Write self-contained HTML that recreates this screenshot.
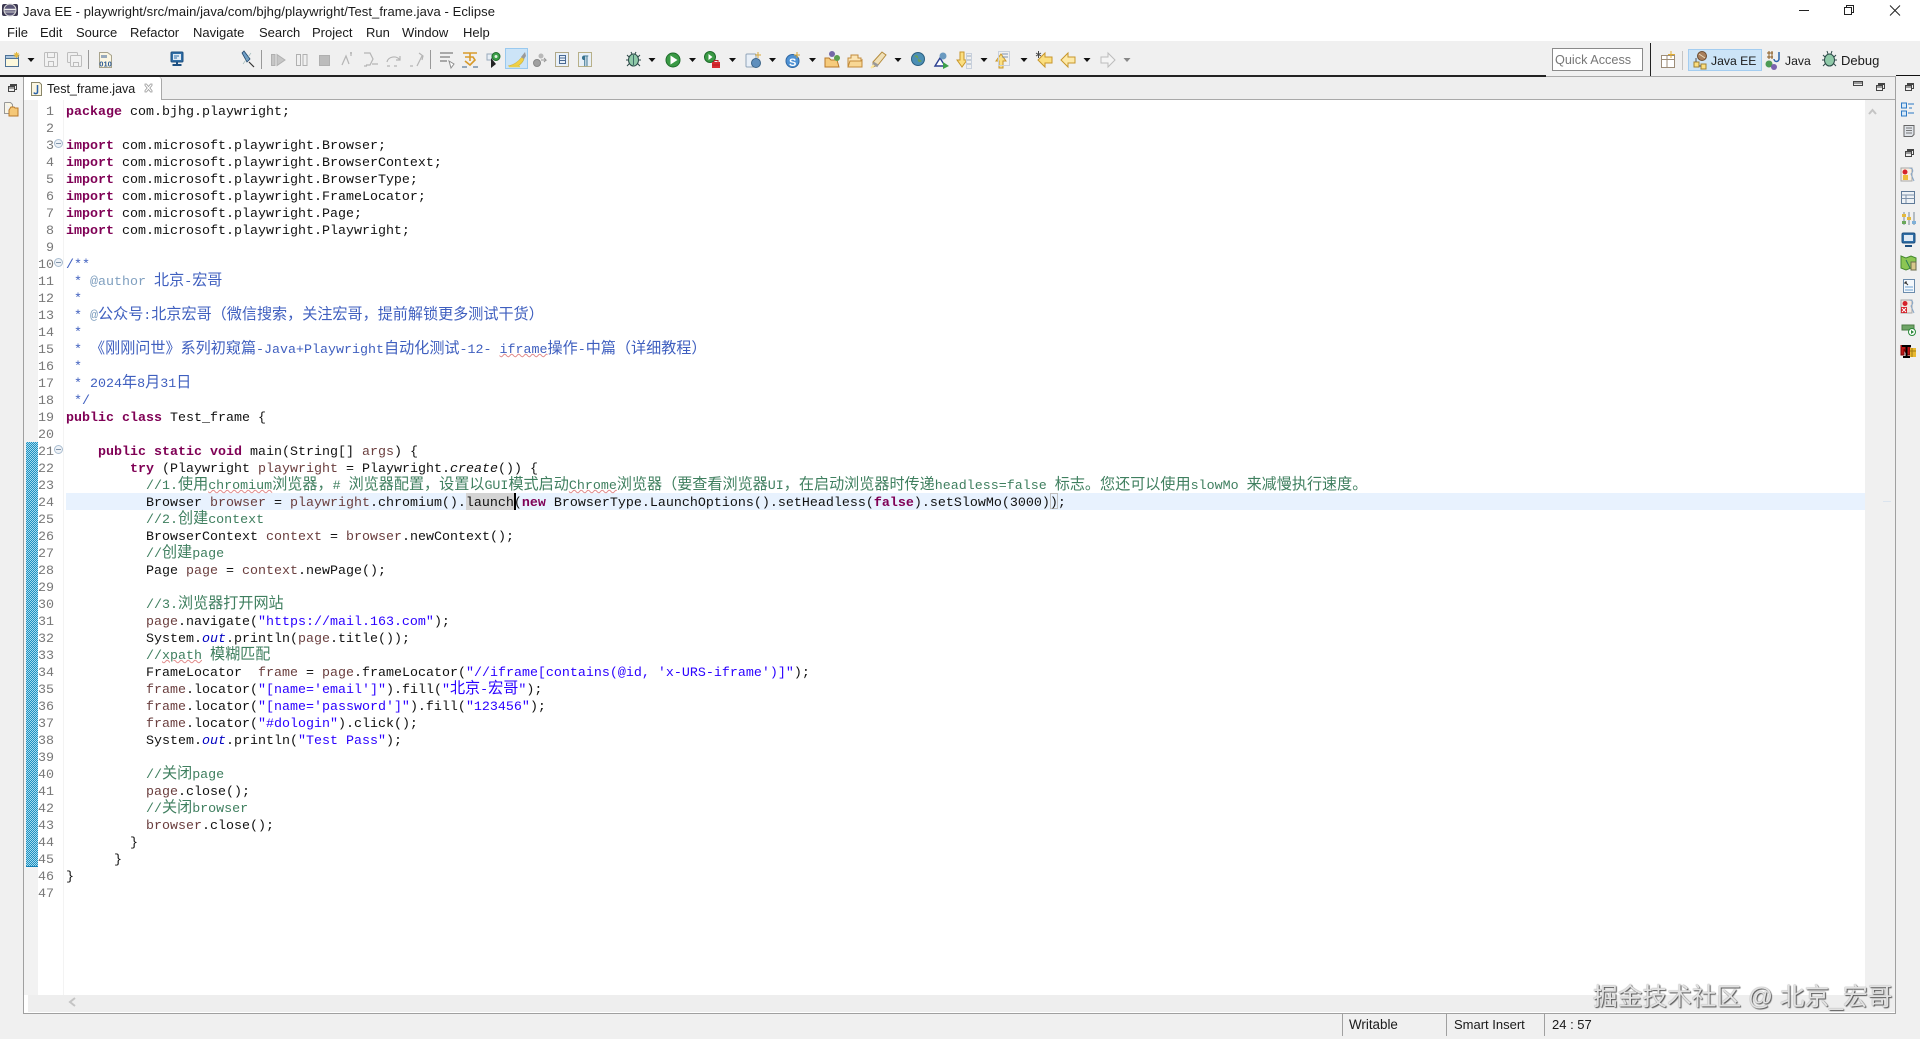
<!DOCTYPE html>
<html><head><meta charset="utf-8"><title>Java EE - Eclipse</title>
<style>
html,body{margin:0;padding:0;width:1920px;height:1039px;overflow:hidden;background:#f0f0f0}
body{position:relative;font-family:"Liberation Sans","Noto Sans CJK SC",sans-serif;color:#1a1a1a}
.a{position:absolute}
.t{position:absolute;white-space:pre;font-size:13px;line-height:16px}
#code{position:absolute;left:66px;top:104px;font:13.33px/17px "Liberation Mono","WenQuanYi Zen Hei",monospace;color:#111}
#code div{height:17px;white-space:pre}
#nums{position:absolute;left:30px;width:24px;top:104px;text-align:right;font:13.33px/17px "Liberation Mono",monospace;color:#787878}
#nums div{height:17px}
.k{color:#7f0055;font-weight:bold}
.c{color:#3f7f5f}.d{color:#3f5fbf}.g{color:#7f9fbf}.s{color:#2a00ff}.v{color:#6a3e3e}.o{color:#0000c0;font-style:italic}
i{font-style:normal;font-size:15.1px;line-height:0;font-family:"WenQuanYi Zen Hei","Noto Sans CJK SC",sans-serif}
u{text-decoration:underline wavy #e08a8a 1px;text-underline-offset:0}
</style></head><body>
<div class="a" style="left:0;top:0;width:1920px;height:41px;background:#fff"></div>
<div class="a" style="left:0;top:41px;width:1920px;height:35px;background:#f0f0f0"></div>
<div class="t" style="left:23px;top:4px;letter-spacing:.075px">Java EE - playwright/src/main/java/com/bjhg/playwright/Test_frame.java - Eclipse</div>
<div class="t" style="left:7px;top:25px">File</div><div class="t" style="left:40px;top:25px">Edit</div><div class="t" style="left:76px;top:25px">Source</div><div class="t" style="left:130px;top:25px">Refactor</div><div class="t" style="left:193px;top:25px">Navigate</div><div class="t" style="left:259px;top:25px">Search</div><div class="t" style="left:312px;top:25px">Project</div><div class="t" style="left:366px;top:25px">Run</div><div class="t" style="left:402px;top:25px">Window</div><div class="t" style="left:463px;top:25px">Help</div>

<!-- frame -->
<div class="a" style="left:23px;top:76px;width:1873px;height:938px;box-sizing:border-box;border:1px solid #a0a0a0;border-top:none;background:#fff"></div>
<div class="a" style="left:24px;top:77px;width:1871px;height:22px;background:#eee"></div>
<div class="a" style="left:24px;top:99px;width:1871px;height:1px;background:#a8a8a8"></div>
<div class="a" style="left:0;top:75px;width:1546px;height:2px;background:#222"></div>
<div class="a" style="left:1546px;top:76px;width:350px;height:1px;background:#a8a8a8"></div>
<div class="a" style="left:1896px;top:75px;width:24px;height:1px;background:#111"></div>
<div class="a" style="left:1650px;top:43px;width:1px;height:33px;background:#222"></div>
<div class="a" style="left:24px;top:77px;width:138px;height:23px;box-sizing:border-box;background:#fff;border-right:1px solid #a8a8a8;border-radius:0 3px 0 0"></div>
<div class="t" style="left:47px;top:81px;font-size:12.5px">Test_frame.java</div>

<!-- editor rulers -->
<div class="a" style="left:24px;top:100px;width:14px;height:895px;background:#f2f2f2"></div>
<div class="a" style="left:63px;top:100px;width:1px;height:895px;background:#f3f3f3"></div>
<div class="a" style="left:26px;top:442px;width:12px;height:425px;background:repeating-conic-gradient(#1e8fc0 0 25%,#a6dcef 0 50%) 0 0/2px 2px"></div>
<div class="a" style="left:26px;top:866px;width:12px;height:1px;background:#1580b5"></div>
<div class="a" style="left:1865px;top:100px;width:30px;height:912px;background:#f0f0f0"></div>
<div class="a" style="left:28px;top:995px;width:1867px;height:17px;background:#eee"></div>
<div class="a" style="left:66px;top:493px;width:1799px;height:17px;background:#e8f2fe"></div>
<div class="a" style="left:466px;top:493px;width:48px;height:17px;background:#d4d4d4"></div>
<div class="a" style="left:1050px;top:493px;width:8px;height:16px;box-sizing:border-box;border:1px solid #c0c0c0"></div>
<div class="a" style="left:514px;top:493px;width:1.5px;height:17px;background:#000"></div>

<div id="nums">
<div>1</div><div>2</div><div>3</div><div>4</div><div>5</div><div>6</div><div>7</div><div>8</div><div>9</div><div>10</div><div>11</div><div>12</div><div>13</div><div>14</div><div>15</div><div>16</div><div>17</div><div>18</div><div>19</div><div>20</div><div>21</div><div>22</div><div>23</div><div>24</div><div>25</div><div>26</div><div>27</div><div>28</div><div>29</div><div>30</div><div>31</div><div>32</div><div>33</div><div>34</div><div>35</div><div>36</div><div>37</div><div>38</div><div>39</div><div>40</div><div>41</div><div>42</div><div>43</div><div>44</div><div>45</div><div>46</div><div>47</div>
</div>

<div id="code">
<div><span class="k">package</span> com.bjhg.playwright;</div>
<div></div>
<div><span class="k">import</span> com.microsoft.playwright.Browser;</div>
<div><span class="k">import</span> com.microsoft.playwright.BrowserContext;</div>
<div><span class="k">import</span> com.microsoft.playwright.BrowserType;</div>
<div><span class="k">import</span> com.microsoft.playwright.FrameLocator;</div>
<div><span class="k">import</span> com.microsoft.playwright.Page;</div>
<div><span class="k">import</span> com.microsoft.playwright.Playwright;</div>
<div></div>
<div class="d">/**</div>
<div class="d"> * <span class="g">@author</span> <i>北京</i>-<i>宏哥</i></div>
<div class="d"> *</div>
<div class="d"> * <span class="g">@</span><i>公众号</i>:<i>北京宏哥（微信搜索，关注宏哥，提前解锁更多测试干货）</i></div>
<div class="d"> *</div>
<div class="d"> * <i>《刚刚问世》系列初窥篇</i>-Java+Playwright<i>自动化测试</i>-12- <u>iframe</u><i>操作</i>-<i>中篇（详细教程）</i></div>
<div class="d"> *</div>
<div class="d"> * 2024<i>年</i>8<i>月</i>31<i>日</i></div>
<div class="d"> */</div>
<div><span class="k">public class</span> Test_frame {</div>
<div></div>
<div>    <span class="k">public static void</span> main(String[] <span class="v">args</span>) {</div>
<div>        <span class="k">try</span> (Playwright <span class="v">playwright</span> = Playwright.<em>create</em>()) {</div>
<div class="c">          //1.<i>使用</i><u>chromium</u><i>浏览器，</i># <i>浏览器配置，设置以</i>GUI<i>模式启动</i><u>Chrome</u><i>浏览器（要查看浏览器</i>UI<i>，在启动浏览器时传递</i>headless=false <i>标志。您还可以使用</i>slowMo <i>来减慢执行速度。</i></div>
<div>          Browser <span class="v">browser</span> = <span class="v">playwright</span>.chromium().launch(<span class="k">new</span> BrowserType.LaunchOptions().setHeadless(<span class="k">false</span>).setSlowMo(3000));</div>
<div class="c">          //2.<i>创建</i>context</div>
<div>          BrowserContext <span class="v">context</span> = <span class="v">browser</span>.newContext();</div>
<div class="c">          //<i>创建</i>page</div>
<div>          Page <span class="v">page</span> = <span class="v">context</span>.newPage();</div>
<div></div>
<div class="c">          //3.<i>浏览器打开网站</i></div>
<div>          <span class="v">page</span>.navigate(<span class="s">"https://mail.163.com"</span>);</div>
<div>          System.<span class="o">out</span>.println(<span class="v">page</span>.title());</div>
<div class="c">          //<u>xpath</u> <i>模糊匹配</i></div>
<div>          FrameLocator  <span class="v">frame</span> = <span class="v">page</span>.frameLocator(<span class="s">"//iframe[contains(@id, 'x-URS-iframe')]"</span>);</div>
<div>          <span class="v">frame</span>.locator(<span class="s">"[name='email']"</span>).fill(<span class="s">"<i>北京</i>-<i>宏哥</i>"</span>);</div>
<div>          <span class="v">frame</span>.locator(<span class="s">"[name='password']"</span>).fill(<span class="s">"123456"</span>);</div>
<div>          <span class="v">frame</span>.locator(<span class="s">"#dologin"</span>).click();</div>
<div>          System.<span class="o">out</span>.println(<span class="s">"Test Pass"</span>);</div>
<div></div>
<div class="c">          //<i>关闭</i>page</div>
<div>          <span class="v">page</span>.close();</div>
<div class="c">          //<i>关闭</i>browser</div>
<div>          <span class="v">browser</span>.close();</div>
<div>        }</div>
<div>      }</div>
<div>}</div>
<div></div>
</div>

<!-- toolbar right / perspective -->
<div class="a" style="left:1552px;top:48px;width:91px;height:23px;box-sizing:border-box;border:1px solid #8a8a8a;background:#fff"></div>
<div class="t" style="left:1555px;top:52px;font-size:12.7px;color:#777">Quick Access</div>
<div class="a" style="left:1688px;top:49px;width:74px;height:22px;box-sizing:border-box;background:#cce4f7;border:1px solid #a4cdf0"></div>
<div class="a" style="left:1682px;top:51px;width:1px;height:19px;background:#c4c4c4"></div>
<div class="a" style="left:505px;top:48px;width:23px;height:21px;box-sizing:border-box;background:#cce4f7;border:1px solid #99c9ef"></div>
<div class="t" style="left:1711px;top:53px;font-size:12.2px">Java EE</div>
<div class="t" style="left:1785px;top:53px;font-size:12.2px">Java</div>
<div class="t" style="left:1841px;top:53px;font-size:13px">Debug</div>

<!-- status -->
<div class="a" style="left:1342px;top:1014px;width:1px;height:22px;background:#a0a0a0"></div>
<div class="a" style="left:1446px;top:1014px;width:1px;height:22px;background:#a0a0a0"></div>
<div class="a" style="left:1544px;top:1014px;width:1px;height:22px;background:#a0a0a0"></div>
<div class="t" style="left:1349px;top:1017px;font-size:13.4px">Writable</div>
<div class="t" style="left:1454px;top:1017px">Smart Insert</div>
<div class="t" style="left:1552px;top:1017px">24 : 57</div>

<svg class="a" style="left:0;top:0" width="1920" height="1039" viewBox="0 0 1920 1039" fill="none">
<defs><path id="dr" d="M-3.5 0h7l-3.5 4z" fill="#111"/>
<g id="rs"><rect x="2.500" y=".5" width="6" height="5" fill="none" stroke="#444"/><rect x=".5" y="2.500" width="6" height="5" fill="#f0f0f0" stroke="#444"/><path d="M1 4h5M3 1.500h5" stroke="#444"/></g>
<g id="fold"><circle cx="4.500" cy="4.500" r="4" fill="#eef2f7" stroke="#a9bccf"/><path d="M2 4.500h5" stroke="#7f93a8"/></g></defs>

<!-- title icon -->
<rect x="2" y="7" width="16" height="12" rx="2" fill="#3c3850" transform="translate(0,-3)"/><circle cx="10" cy="10" r="6" fill="#5b5777" stroke="#ddd"/><path d="M4.500 9.500h11" stroke="#eee" stroke-width="1.500"/><path d="M4.500 12h11" stroke="#ccc"/>
<!-- window controls -->
<path d="M1799 10.500h10" stroke="#222"/><rect x="1844.500" y="7.500" width="7" height="7" stroke="#222"/><path d="M1846.500 7.500v-2h7v7h-2" stroke="#222"/><path d="M1890 5.500l10 10M1900 5.500l-10 10" stroke="#222"/>

<!-- new -->
<g><rect x="5.500" y="55.500" width="13" height="11" fill="#fdf8dc" stroke="#4f7396"/><rect x="5.500" y="55.500" width="13" height="3" fill="#a9c5e0" stroke="#4f7396"/><path d="M16.500 52v6M13.500 55h6M14.500 53l4 4M18.500 53l-4 4" stroke="#e4b93c"/></g>
<use href="#dr" x="31" y="58"/>
<!-- save -->
<g stroke="#bdbdbd"><rect x="44.500" y="52.500" width="13" height="14" rx="1" fill="#f2f2f2"/><rect x="47.500" y="52.500" width="7" height="5"/><rect x="48.500" y="61.500" width="5" height="5"/>
<rect x="67.500" y="52.500" width="10" height="10" rx="1" fill="#f0f0f0"/><rect x="70.500" y="55.500" width="11" height="11" rx="1" fill="#f2f2f2"/><rect x="73.500" y="62.500" width="5" height="4"/></g>
<path d="M88.500 50v19" stroke="#999"/>
<!-- 010 -->
<path d="M99.500 52.500h8l4 3v12h-12z" fill="#fbf6e2" stroke="#a8a38c"/><rect x="101" y="55" width="6" height="3" fill="#9ab"/><text x="99.300" y="66.500" font-family="Liberation Sans" font-size="7.500" font-weight="bold" fill="#2c5a94">010</text>
<!-- monitor -->
<rect x="171" y="52" width="12" height="10" rx="1" fill="#2f6ea6" stroke="#1d4f80"/><rect x="173" y="54" width="8" height="6" fill="#dfeaf5"/><path d="M174 56h5M174 58h3" stroke="#2f6ea6"/><path d="M172.500 65h9M177 62v3" stroke="#1d4f80" stroke-width="2"/>
<!-- pin -->
<path d="M242 53l2-2 6 8-3 3z" fill="#6f9fc8" stroke="#24476b" stroke-width=".8"/><path d="M249 62l5 5" stroke="#333" stroke-width="1.200"/><path d="M243 64l8-11" stroke="#8aa" stroke-width=".6"/>
<path d="M261.500 50v19" stroke="#999"/>
<!-- debug greyed -->
<g fill="#c6c6c6" stroke="#b0b0b0"><rect x="271.500" y="54.500" width="3.500" height="11"/><path d="M277 54.500l8 5.500-8 5.500z"/><rect x="296.500" y="54.500" width="4" height="11" fill="none"/><rect x="303" y="54.500" width="4" height="11" fill="none"/><rect x="319.500" y="55.500" width="10" height="10" fill="#bcbcbc"/></g>
<g stroke="#b5b5b5" stroke-width="1.200"><path d="M342 65l4-9 3 8M350 53l2 0M351 52v4"/><path d="M364 53h6l3 6-3 6h-4M372 64h6M364 66h3"/><path d="M387 62a7 6 0 0 1 13-2M400 56v4h-4M387 66h3M394 66h3"/><path d="M410 66h3M417 66l5-10M419 53l4 3-1 4"/></g>
<path d="M430.500 50v19" stroke="#999"/>
<!-- toolbar 2 -->
<path d="M440 53h13M440 57h10M440 61h7" stroke="#8f8f8f" stroke-width="1.500"/><path d="M449 61l5 3-3 4z" fill="#fff" stroke="#8f8f8f"/>
<path d="M463 53h14M470 53v8M465 57h8l2 3-5 5-5-4" stroke="#d89a2a" stroke-width="1.600"/><path d="M462 67h5M473 67h5" stroke="#3a5f86"/>
<rect x="487" y="54" width="5" height="6" fill="#e8eef5" stroke="#99aabb"/><circle cx="496" cy="56.500" r="4" fill="#3da04a" stroke="#1e6c2b"/><circle cx="496" cy="56.500" r="1.500" fill="#dff2df"/><path d="M491 58v10l5-4z" fill="#222"/>
<path d="M508 66c6-1 10-4 14-9l2 2c-1 3-3 5-6 7z" fill="#f2d043" stroke="#c8b040" stroke-width=".6"/><path d="M521 57l4-5 1 4-2 3z" fill="#9a9a9a"/><path d="M509 66.500h11" stroke="#e8d04a" stroke-width="1.500"/>
<circle cx="537" cy="63" r="3.500" fill="#a0a0a0" stroke="#888"/><circle cx="541" cy="56" r="2.500" fill="#b8b8b8"/><path d="M541 60h5l-2-2M546 60l-2 2" stroke="#999"/>
<rect x="555.500" y="52.500" width="13" height="14" fill="#e8f0f8" stroke="#b0a888"/><path d="M559.500 55.500h6v8h-6zM559.500 58h6M559.500 60.500h6" stroke="#4a6a94"/>
<rect x="578.500" y="52.500" width="13" height="14" fill="#e8f0f8" stroke="#b8b088"/><text x="581.500" y="64.500" font-family="Liberation Sans" font-size="13" font-weight="bold" fill="#36728f">¶</text>
<!-- bug -->
<g stroke="#2c4a48"><path d="M627 55l3 3M640 55l-3 3M626 60h4M641 60h-4M627 66l3-3M640 66l-3-3M631 52l1 2M636 52l-1 2"/><ellipse cx="633.500" cy="60" rx="5" ry="6" fill="#8fc9a8"/><path d="M633.500 55v10" stroke="#3d6d68"/></g>
<use href="#dr" x="652" y="58"/>
<circle cx="673" cy="60" r="7" fill="#3a9a45" stroke="#1e6c2b"/><path d="M670.500 55.500l7 4.500-7 4.500z" fill="#fff"/>
<use href="#dr" x="692.500" y="58"/>
<circle cx="710" cy="57" r="5.500" fill="#3a9a45" stroke="#1e6c2b"/><path d="M708.500 54l4 3-4 3z" fill="#fff"/><rect x="712" y="62" width="8" height="6" fill="#d92a30"/><path d="M714 62v-1.500h4V62M712 65h8" stroke="#b31d22"/>
<use href="#dr" x="732.500" y="58"/>
<rect x="746" y="54" width="10" height="13" rx="1" fill="#e8eff7" stroke="#8fa3b8"/><circle cx="756" cy="63" r="4.500" fill="#5f8fbd" stroke="#3b6488"/><path d="M758 52v6M755 55h6" stroke="#d8a93a"/>
<use href="#dr" x="772.500" y="58"/>
<circle cx="792.500" cy="61" r="6.500" fill="#4f92d4" stroke="#2f68a3"/><text x="789" y="66" font-family="Liberation Sans" font-weight="bold" font-size="11" fill="#fff">S</text><path d="M797 52v6M794 55h6" stroke="#d8a93a"/>
<use href="#dr" x="812.500" y="58"/>
<path d="M825 67V58h4l2 2h6l2 7z" fill="#f6cb7c" stroke="#b8792a"/><circle cx="832" cy="54" r="3" fill="#7568a8"/><circle cx="837" cy="58" r="3" fill="#5da04f"/>
<path d="M848 67V58h3v-3h7v3h3v9z" fill="#fbe4b4" stroke="#c28a3a"/><path d="M848 67l2-6h11l1-1v7z" fill="#f8d794" stroke="#c28a3a"/>
<path d="M873 62l9-10 4 3-8 10-5 2z" fill="#f0e0b8" stroke="#b48b3c"/><path d="M873 63l5 3" stroke="#999" stroke-width="3"/><path d="M871 68l3-3" stroke="#fbe7a0" stroke-width="2"/>
<use href="#dr" x="898" y="58"/>
<circle cx="918" cy="59" r="6.500" fill="#4c8fb5" stroke="#2b5f80"/><path d="M914 56c3-2 5 0 4 3s2 4 4 2" fill="#6aa05a"/>
<path d="M935 66l5-8 5 8z" fill="#fff" stroke="#2b3f90" stroke-width="1.400"/><circle cx="943" cy="56" r="3.500" fill="#6a9ac0"/><path d="M943 62l6 4-6 3z" fill="#3da04a"/>
<path d="M960 52h4v8h3l-5 7-5-7h3z" fill="#fbdf80" stroke="#c8962a"/><path d="M966 56h5M966 60h5M966 64h5" stroke="#9ab"/><rect x="966.500" y="53.500" width="5" height="15" stroke="#c8d0dc"/>
<use href="#dr" x="984" y="58"/>
<path d="M1003 68h-4v-7h-3l5-7 5 7h-3z" fill="#fbdf80" stroke="#c8962a"/><rect x="998.500" y="51.500" width="11" height="14" stroke="#c8d0dc"/><path d="M1002 54h6M1002 57h6" stroke="#7f94b2"/>
<use href="#dr" x="1024" y="58"/>
<path d="M1052 57v6h-7v4l-7-7 7-7v4z" fill="#fbdf80" stroke="#c8962a"/><path d="M1036 53l5 3M1041 53l-5 3M1038.500 51v7" stroke="#444"/>
<path d="M1075 57v6h-7v4l-7-7 7-7v4z" fill="#fde9a8" stroke="#c8962a"/>
<use href="#dr" x="1087" y="58"/>
<path d="M1101 57v6h7v4l7-7-7-7v4z" fill="#f4f4f4" stroke="#bcbcbc"/>
<path d="M1123.500 58h7l-3.500 4z" fill="#888"/>
<!-- perspectives -->
<rect x="1661.500" y="55.500" width="13" height="12" fill="#fff" stroke="#9c8c78"/><path d="M1661.500 59.500h13M1667 55.500v12" stroke="#9c8c78"/><path d="M1671 51v7M1668 54.500h7" stroke="#e0ad35"/>
<rect x="1694" y="62" width="5" height="5" fill="#fbdf80" stroke="#a08030"/><rect x="1701" y="64" width="5" height="5" fill="#fbdf80" stroke="#a08030"/><path d="M1696 62v-4M1699 66h2" stroke="#555"/><circle cx="1702" cy="56" r="4.500" fill="#a87f5c" stroke="#6c4c30"/><path d="M1699 54l6 4" stroke="#e8d8b8"/>
<path d="M1767 53h6M1767 57h6M1769 51v8M1772 51v8" stroke="#8a5a20"/><circle cx="1769" cy="64" r="3.500" fill="#4e9b55"/><circle cx="1774" cy="67" r="3" fill="#7a63ae"/><path d="M1779 52v7a2.500 2.500 0 0 1-5 0" stroke="#2b62a8" stroke-width="1.500"/>
<g stroke="#2c4a48"><path d="M1823 55l3 3M1836 55l-3 3M1822 60h4M1837 60h-4M1823 66l3-3M1836 66l-3-3M1827 51l1 3M1832 51l-1 3"/><ellipse cx="1829.500" cy="60" rx="5" ry="6" fill="#8fc9a8"/></g>
<!-- tab icon -->
<path d="M31.500 82.500h8l2 2v11h-10z" fill="#fbf6e2" stroke="#8a8668"/><path d="M37.500 85v7c0 2-3 2-3.500 .5" stroke="#2b62a8" stroke-width="1.500"/>
<path d="M145 84h1.500l2 2.500 2-2.500h1.500v1.500l-2.200 2.500 2.200 2.500V92h-1.500l-2-2.500-2 2.500H145v-1.500l2.200-2.500-2.200-2.500z" fill="#fff" stroke="#999" stroke-width=".8"/>
<!-- left trim -->
<use href="#rs" x="8" y="84"/>
<path d="M4.500 102.500h6l2 2v5M4.500 102.500v11h4" fill="#fbf6e2" stroke="#999"/><path d="M9 110l2-3h3l1 1h3v8H9z" fill="#f5c878" stroke="#b8792a"/>
<!-- editor min/max -->
<rect x="1853.500" y="81.500" width="9" height="4" stroke="#444"/><path d="M1853.500 83h9" stroke="#444"/>
<use href="#rs" x="1876" y="83"/>
<!-- fold markers -->
<use href="#fold" x="54" y="139"/><use href="#fold" x="54" y="258"/><use href="#fold" x="54" y="445"/>
<!-- scroll arrows -->
<path d="M1869 114l3.500-4 3.500 4" stroke="#c4c4c4" stroke-width="2"/><path d="M75 998l-5 4 5 4" stroke="#c4c4c4" stroke-width="2"/>
<rect x="1883" y="501" width="8" height="1" fill="#dbe4ee"/>
<!-- right trim -->
<use href="#rs" x="1905" y="83"/>
<g><rect x="1901.500" y="103" width="5" height="5" fill="#d6e8f8" stroke="#2a78c5"/><rect x="1901.500" y="111" width="5" height="5" fill="#d6e8f8" stroke="#2a78c5"/><path d="M1908 104h6M1909 108h3M1908 113h6" stroke="#2a78c5"/>
<path d="M1904 125.500h10v9l-2 2h-8z" fill="#dfe3e8" stroke="#666"/><path d="M1906 128h6M1906 130.500h6M1906 133h6" stroke="#777"/>
<use href="#rs" x="1905" y="149"/>
<rect x="1901" y="168" width="11" height="13" fill="#f8eee0" stroke="#a8a8a8"/><circle cx="1905" cy="172" r="2.500" fill="#d5222a"/><rect x="1903" y="175" width="5" height="5" fill="#eebc3a"/><path d="M1909 168c4 0 5 3 2 6l3 7" stroke="#8aa8c8"/>
<rect x="1901.500" y="191.500" width="13" height="12" fill="#eef2f6" stroke="#5f7a98"/><path d="M1901.500 195h13M1901.500 198.500h13M1906 195v8" stroke="#7f93ab"/>
<path d="M1904 212v13M1909 212v13M1914 212v13" stroke="#789"/><rect x="1902" y="214" width="4" height="3" fill="#e4b93c"/><rect x="1907" y="217" width="4" height="3" fill="#e4b93c"/><rect x="1912" y="221" width="4" height="3" fill="#7fb0d8"/><rect x="1902" y="221" width="4" height="3" fill="#6aa85a"/>
<rect x="1902" y="233" width="13" height="10" rx="1.500" fill="#2f6ea6" stroke="#1d4f80"/><rect x="1904" y="235" width="9" height="6" fill="#dfeaf5"/><path d="M1905 246h7" stroke="#1d4f80" stroke-width="2"/>
<path d="M1901 256l5 2 5-2 5 2v12l-5-2-5 2-5-2z" fill="#8cc653" stroke="#44882e"/><rect x="1911" y="262" width="5" height="8" fill="#d8c88c" stroke="#6c6c4c"/><path d="M1906 260l4 8" stroke="#2a7a5a"/>
<rect x="1903.500" y="279.500" width="11" height="13" fill="#f4f8fc" stroke="#6c8cac"/><path d="M1905 282l3 3M1905 282v2M1905 282h2" stroke="#333"/><path d="M1905 287h8M1905 290h8" stroke="#6ca0d0"/>
<rect x="1901" y="300" width="11" height="13" fill="#f2e8e0" stroke="#a8a8a8"/><circle cx="1905" cy="303.500" r="2.500" fill="#d5222a"/><rect x="1901" y="307" width="6" height="6" fill="#d5222a"/><path d="M1902 308l4 4M1906 308l-4 4" stroke="#fff"/><path d="M1909 300c4 0 5 3 2 6l3 7" stroke="#8aa8c8"/>
<rect x="1902" y="325" width="12" height="5" fill="#6fa566" stroke="#4a7a44"/><circle cx="1912" cy="332" r="3.500" fill="#fff" stroke="#2a8a3a"/><path d="M1911 330l3 2-3 2z" fill="#2a8a3a"/>
<path d="M1901 345v10h3v-6l3 6h3v-10" fill="#c01818" stroke="#700"/><path d="M1902 346h9M1906.500 346v11M1903 357h7" stroke="#000" stroke-width="2"/><rect x="1910" y="348" width="6" height="9" fill="#e8b830"/><path d="M1910 351h6M1912 348v9" stroke="#a07a10"/></g>
</svg>

<div class="a" style="left:1593px;top:982px;white-space:pre;font-size:24.7px;line-height:32px;font-family:'Liberation Sans','WenQuanYi Zen Hei','Noto Sans CJK SC',sans-serif;color:#e2e2e2;text-shadow:1px 1px 1px #555,0 0 1px #777">掘金技术社区 @ 北京_宏哥</div>
</body></html>
